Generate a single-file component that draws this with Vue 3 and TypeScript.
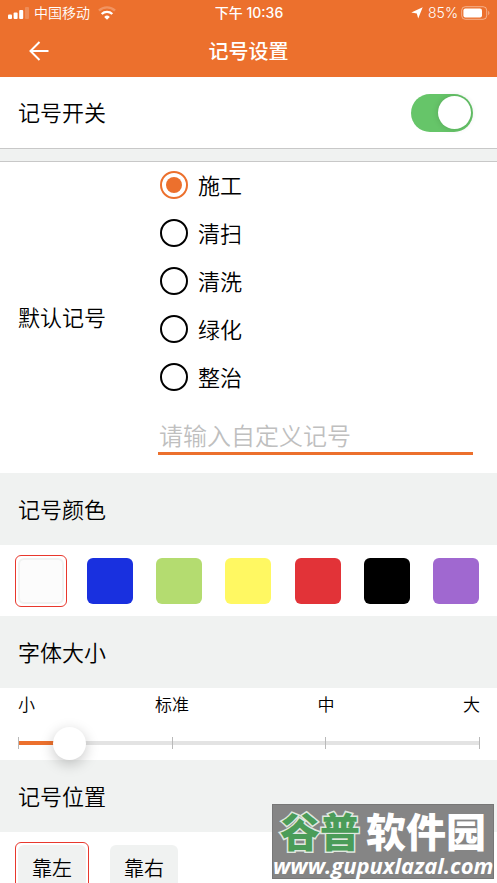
<script setup lang="ts">
import { computed, ref } from 'vue'

interface Swatch {
  name: string
  value: string
}

const enabled = ref(true)
const marks: string[] = ['施工', '清扫', '清洗', '绿化', '整治']
const mark = ref('施工')
const customMark = ref('')

const colors: Swatch[] = [
  { name: '白色', value: '#fcfcfc' },
  { name: '蓝色', value: '#1930df' },
  { name: '绿色', value: '#b4dc70' },
  { name: '黄色', value: '#fff862' },
  { name: '红色', value: '#e23338' },
  { name: '黑色', value: '#000000' },
  { name: '紫色', value: '#a068d0' },
]
const color = ref('#fcfcfc')

const sizes: string[] = ['小', '标准', '中', '大']
const size = ref(1)
const maxSize = 9
const fill = computed(() => `${(size.value / maxSize) * 100}%`)

const positions: string[] = ['靠左', '靠右']
const position = ref('靠左')
</script>

<template>
  <div class="screen">
    <header class="top">
      <div class="status">
        <div class="status-side">
          <svg class="signal" viewBox="0 0 22 12" aria-hidden="true">
            <rect x="0" y="7.500" width="4" height="4.500" rx="1" />
            <rect x="5.600" y="5.500" width="4" height="6.500" rx="1" />
            <rect x="11.200" y="3" width="4" height="9" rx="1" />
            <rect x="17" y="0" width="4" height="12" rx="1" opacity="0.2" />
          </svg>
          <span class="carrier">中国移动</span>
          <svg class="wifi" viewBox="0 0 18 14" aria-hidden="true">
            <path d="M1 4.700A11.200 11.200 0 0 1 17 4.700" opacity="0.25" />
            <path d="M3.700 8A7.600 7.600 0 0 1 14.300 8" />
            <path class="solid" d="M9 13.700L6.200 10.900A4 4 0 0 1 11.800 10.900Z" />
          </svg>
        </div>
        <span class="time">下午 10:36</span>
        <div class="status-side end">
          <svg class="locate" viewBox="0 0 12 12" aria-hidden="true">
            <path d="M11.700 0.300L7.200 11.600L5.800 6.500L0.300 5.600Z" />
          </svg>
          <span class="percent">85%</span>
          <svg class="battery" viewBox="0 0 29 14" aria-hidden="true">
            <rect class="shell" x="0.700" y="0.700" width="25" height="12.600" rx="3.600" />
            <rect x="2.400" y="2.400" width="18.600" height="9.200" rx="2" />
            <path d="M27.200 4.800C28.900 5.600 28.900 8.400 27.200 9.200Z" opacity="0.45" />
          </svg>
        </div>
      </div>
      <div class="nav">
        <button class="back" type="button" aria-label="返回">
          <svg viewBox="0 0 20 20" aria-hidden="true">
            <path d="M19.500 10H1.500M10.500 1L1.500 10L10.500 19" />
          </svg>
        </button>
        <h1 class="title">记号设置</h1>
        <span></span>
      </div>
    </header>

    <main>
      <div class="row switch-row">
        <label class="row-text" for="mark-switch">记号开关</label>
        <input id="mark-switch" v-model="enabled" class="switch" type="checkbox" role="switch" />
      </div>
      <div class="divider"></div>

      <section class="defaults">
        <h2 id="default-label" class="label row-text">默认记号</h2>
        <div class="choices" role="radiogroup" aria-labelledby="default-label">
          <label v-for="item in marks" :key="item" class="choice">
            <input v-model="mark" class="radio" type="radio" name="mark" :value="item" />
            <span class="row-text">{{ item }}</span>
          </label>
          <div class="custom">
            <input
              v-model="customMark"
              class="custom-input"
              type="text"
              aria-label="自定义记号"
              placeholder="请输入自定义记号"
            />
          </div>
        </div>
      </section>

      <h2 class="row heading"><span class="row-text">记号颜色</span></h2>
      <div class="colors">
        <button
          v-for="c in colors"
          :key="c.name"
          type="button"
          class="frame"
          :class="{ active: color === c.value }"
          :aria-label="c.name"
          :aria-pressed="color === c.value"
          @click="color = c.value"
        >
          <span
            class="swatch"
            :class="{ pale: c.value === '#fcfcfc' }"
            :style="{ backgroundColor: c.value }"
          ></span>
        </button>
      </div>

      <h2 class="row heading"><span class="row-text">字体大小</span></h2>
      <div class="sizes">
        <div class="size-labels">
          <span v-for="s in sizes" :key="s" class="size-label">{{ s }}</span>
        </div>
        <div class="slider">
          <div class="track"><div class="fill" :style="{ width: fill }"></div></div>
          <div class="ticks"><i v-for="s in sizes" :key="s"></i></div>
          <input
            v-model.number="size"
            class="range"
            type="range"
            min="0"
            :max="maxSize"
            aria-label="字体大小"
          />
        </div>
      </div>

      <h2 class="row heading"><span class="row-text">记号位置</span></h2>
      <div class="positions">
        <button
          v-for="p in positions"
          :key="p"
          type="button"
          class="frame"
          :class="{ active: position === p }"
          :aria-pressed="position === p"
          @click="position = p"
        >
          <span class="pill">{{ p }}</span>
        </button>
      </div>
    </main>

    <div class="watermark">
      <div class="brand"><span class="green">谷普</span><span>软件园</span></div>
      <div class="site">www.gupuxlazal.com</div>
    </div>
  </div>
</template>

<style>
body {
  margin: 0;
  background: #fff;
}
</style>

<style scoped>
.screen {
  position: relative;
  height: 100vh;
  overflow: hidden;
  background: #fff;
  color: #000;
  font-family: 'Noto Sans CJK SC', sans-serif;
  font-size: 22px;
  font-weight: 350;
  line-height: 32px;
}

.screen *,
.screen *::before {
  box-sizing: border-box;
}

h1,
h2 {
  margin: 0;
  font-size: inherit;
  font-weight: inherit;
}

button {
  padding: 0;
  border: 0;
  background: none;
  color: inherit;
  font: inherit;
}

input {
  margin: 0;
}

.top {
  background: #ec702d;
  color: #fff;
}

.status {
  display: grid;
  grid-template-columns: 1fr auto 1fr;
  align-items: center;
  height: 26px;
  padding: 0 7px 0 8px;
  font-family: Inter, 'Noto Sans CJK SC', sans-serif;
  font-size: 14px;
  line-height: 26px;
}

.status svg {
  fill: #fff;
}

.status-side {
  display: flex;
  align-items: center;
}

.end {
  justify-content: flex-end;
}

.signal {
  width: 22px;
  height: 12px;
  margin-right: 4px;
}

.status .wifi {
  width: 18px;
  height: 14px;
  margin-left: 8px;
  fill: none;
  stroke: #fff;
  stroke-width: 2.4;
}

.wifi .solid {
  fill: #fff;
  stroke: none;
}

.time {
  font-weight: 500;
}

.locate {
  width: 12px;
  height: 12px;
  margin-right: 5px;
}

.percent {
  margin-right: 3px;
}

.battery {
  width: 29px;
  height: 14px;
}

.battery .shell {
  fill: none;
  stroke: #fff;
  stroke-width: 1;
  opacity: 0.45;
}

.nav {
  display: grid;
  grid-template-columns: 1fr auto 1fr;
  align-items: center;
  height: 51px;
  padding: 0 29px 2px;
}

.back {
  display: flex;
  width: 20px;
  height: 20px;
}

.back svg {
  width: 20px;
  height: 20px;
  fill: none;
  stroke: #fff;
  stroke-width: 2;
}

.title {
  font-size: 20px;
  font-weight: 500;
}

.row {
  display: flex;
  align-items: center;
  justify-content: space-between;
  height: 72px;
  padding: 0 24px 0 18px;
}

.row-text {
  padding-bottom: 3px;
}

.heading {
  background: #f0f2f1;
}

.switch-row {
  height: 71px;
}

.switch {
  display: flex;
  align-items: center;
  width: 62px;
  height: 38px;
  padding: 2px;
  border-radius: 19px;
  background: #ddd;
  appearance: none;
}

.switch::before {
  width: 33px;
  height: 33px;
  border-radius: 50%;
  background: #fff;
  box-shadow: 0 0 6px rgba(0, 0, 0, 0.15);
  content: '';
}

.switch:checked {
  justify-content: flex-end;
  background: #66c569;
}

.divider {
  height: 14px;
  border: solid #c8c8c8;
  border-width: 1px 0;
  background: #f0f2f1;
}

.defaults {
  display: flex;
  align-items: center;
  padding: 0 24px 0 18px;
}

.label {
  width: 140px;
}

.choices {
  flex: 1;
  margin-top: -1px;
}

.choice {
  display: flex;
  align-items: center;
  gap: 10px;
  height: 48px;
  padding-left: 2px;
}

.radio {
  display: grid;
  place-items: center;
  width: 28px;
  height: 28px;
  border: 2px solid #000;
  border-radius: 50%;
  appearance: none;
}

.radio:checked {
  border-color: #ec702d;
}

.radio:checked::before {
  width: 16px;
  height: 16px;
  border-radius: 50%;
  background: #ec702d;
  content: '';
}

.custom {
  height: 72px;
  padding-top: 16px;
}

.custom-input {
  display: block;
  width: 100%;
  height: 38px;
  padding: 0 0 0 1px;
  border: 0;
  border-bottom: 3px solid #ec702d;
  border-radius: 0;
  outline: 0;
  background: none;
  color: #000;
  font: 350 24px 'Noto Sans CJK SC', sans-serif;
}

.custom-input::placeholder {
  color: #bfbfbf;
}

.colors {
  display: flex;
  align-items: center;
  justify-content: space-between;
  height: 71px;
  padding: 0 15px;
}

.frame {
  padding: 2px;
  border: 1px solid transparent;
  border-radius: 6px;
}

.frame.active {
  border-color: #e8382d;
}

.swatch {
  display: block;
  width: 46px;
  height: 46px;
  border-radius: 6px;
}

.pale {
  border: 2px solid #f0f2f1;
}

.sizes {
  height: 72px;
  padding: 0 17px 0 18px;
}

.size-labels {
  display: grid;
  grid-template-columns: 1fr 2fr 2fr 1fr;
  height: 32px;
  font-size: 17px;
}

.size-label {
  text-align: center;
}

.size-label:first-child {
  text-align: left;
}

.size-label:last-child {
  text-align: right;
}

.slider {
  position: relative;
  display: grid;
  align-items: center;
  height: 46px;
}

.track,
.ticks {
  grid-area: 1 / 1;
}

.track {
  height: 4px;
  background: #e3e3e3;
}

.fill {
  height: 100%;
  background: #ec702d;
}

.ticks {
  display: flex;
  justify-content: space-between;
}

.ticks i {
  width: 1px;
  height: 12px;
  background: #b9b9b9;
}

.range {
  position: absolute;
  inset: 0 -16px;
  z-index: 1;
  background: none;
  appearance: none;
}

.range::-webkit-slider-thumb {
  width: 33px;
  height: 33px;
  border-radius: 50%;
  background: #fff;
  box-shadow: 0 4px 14px rgba(0, 0, 0, 0.22);
  appearance: none;
}

.positions {
  display: flex;
  gap: 18px;
  padding: 10px 15px;
}

.pill {
  display: block;
  padding: 7px 14px;
  border-radius: 6px;
  background: #f0f2f1;
  font-size: 20px;
}

.watermark {
  position: absolute;
  right: 3px;
  bottom: 4px;
  z-index: 2;
  width: 222px;
  height: 75px;
  border: 1px solid #777;
  background: #858585;
  color: #fff;
  text-align: center;
  white-space: nowrap;
}

.brand {
  display: flex;
  justify-content: center;
  gap: 6px;
  font-size: 40px;
  font-weight: 900;
  line-height: 50px;
}

.green {
  color: #4a9c58;
  paint-order: stroke;
  -webkit-text-stroke: 3px #dfe8df;
}

.site {
  font: italic 700 22px/20px 'Open Sans', sans-serif;
}
</style>
